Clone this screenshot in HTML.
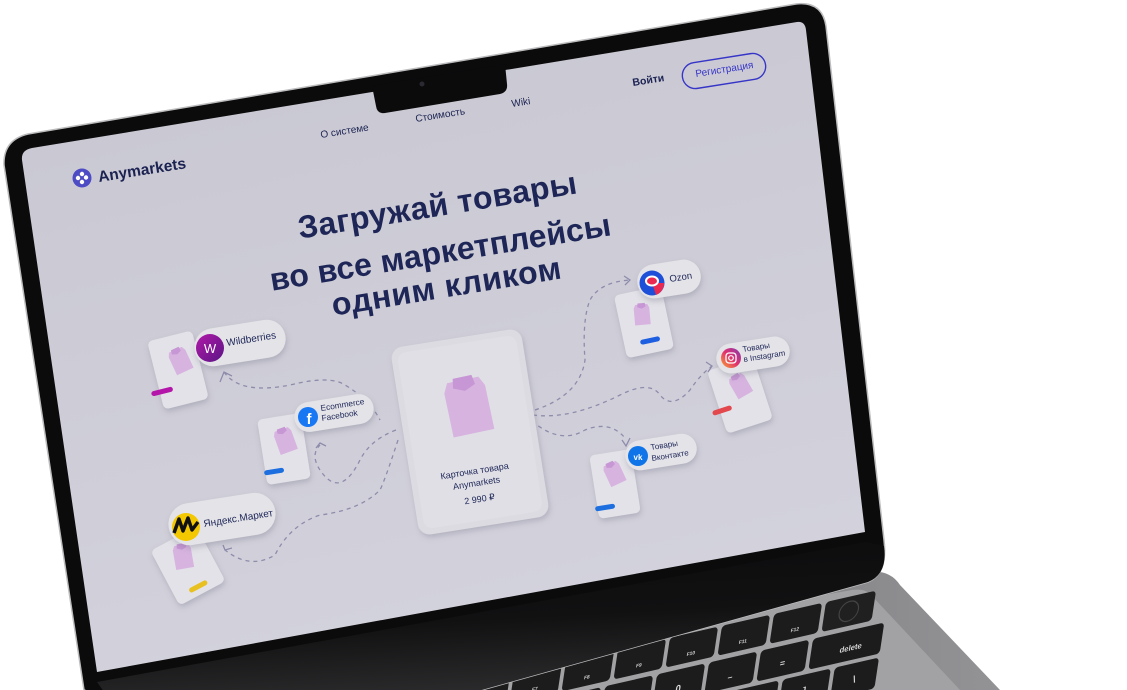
<!DOCTYPE html>
<html><head><meta charset="utf-8"><style>
html,body{margin:0;padding:0;background:#fff;width:1127px;height:690px;overflow:hidden}
svg{display:block}
text{font-family:"Liberation Sans",sans-serif}
</style></head><body>
<svg width="1127" height="690" viewBox="0 0 1127 690" xmlns="http://www.w3.org/2000/svg">
<defs>
<linearGradient id="scr" x1="0" y1="0" x2="0.3" y2="1">
<stop offset="0" stop-color="#c8c7d1"/><stop offset="1" stop-color="#d3d2dc"/></linearGradient>
<linearGradient id="deck" x1="0" y1="0" x2="1" y2="0">
<stop offset="0" stop-color="#555557"/><stop offset="0.6" stop-color="#7e7e81"/><stop offset="1" stop-color="#939396"/></linearGradient>
<linearGradient id="chin" x1="0" y1="0" x2="0.2" y2="1">
<stop offset="0" stop-color="#0b0b0c"/><stop offset="0.45" stop-color="#111112"/><stop offset="1" stop-color="#3c3c3e"/></linearGradient>
<linearGradient id="wb" x1="0" y1="0" x2="1" y2="1"><stop offset="0" stop-color="#b01aa8"/><stop offset="1" stop-color="#5b1485"/></linearGradient>
<linearGradient id="ig" x1="0" y1="1" x2="1" y2="0"><stop offset="0" stop-color="#f9a533"/><stop offset="0.5" stop-color="#e1306c"/><stop offset="1" stop-color="#833ab4"/></linearGradient>
<filter id="sh" x="-30%" y="-30%" width="160%" height="170%"><feDropShadow dx="1" dy="3" stdDeviation="3" flood-color="#77758a" flood-opacity="0.35"/></filter>
<g id="shirt"><path d="M-10,-16 L10,-16 L13,-10 L13,18 L-13,18 L-13,-10 Z" fill="#d7b3e0"/><path d="M-6,-18 L6,-18 L7,-12 L0,-9 L-7,-12 Z" fill="#c796d4"/></g>
</defs>

<!-- deck -->
<path d="M800,570 L880,572 Q893,574 900,585 L1000,690 L150,690 Z" fill="url(#deck)"/>
<path d="M280,690 L852,590 Q866,588 872,596 L960,690 Z" fill="#a2a2a4"/>
<!-- keys -->
<g transform="matrix(0.963,-0.22,-0.15,1,826,602)" fill="#1c1c1d">
<rect x="0" y="0" width="52" height="30" rx="4" fill="#202021"/>
<circle cx="26" cy="15" r="10" fill="none" stroke="#444" stroke-width="1.2"/>
<rect x="-54" y="0" width="50" height="30" rx="4"/>
<rect x="-108" y="0" width="50" height="30" rx="4"/>
<rect x="-162" y="0" width="50" height="30" rx="4"/>
<rect x="-216" y="0" width="50" height="30" rx="4"/>
<rect x="-270" y="0" width="50" height="30" rx="4"/>
<rect x="-324" y="0" width="50" height="30" rx="4"/>
<rect x="-378" y="0" width="50" height="30" rx="4"/>
<rect x="-432" y="0" width="50" height="30" rx="4"/>
<rect x="-486" y="0" width="50" height="30" rx="4"/>
<rect x="-540" y="0" width="50" height="30" rx="4"/>
<rect x="-594" y="0" width="50" height="30" rx="4"/>
<rect x="-8" y="35" width="74" height="31" rx="4"/>
<rect x="-62" y="35" width="50" height="31" rx="4"/>
<rect x="-116" y="35" width="50" height="31" rx="4"/>
<rect x="-170" y="35" width="50" height="31" rx="4"/>
<rect x="-224" y="35" width="50" height="31" rx="4"/>
<rect x="-278" y="35" width="50" height="31" rx="4"/>
<rect x="-332" y="35" width="50" height="31" rx="4"/>
<rect x="-386" y="35" width="50" height="31" rx="4"/>
<rect x="-440" y="35" width="50" height="31" rx="4"/>
<rect x="-494" y="35" width="50" height="31" rx="4"/>
<rect x="20" y="70" width="46" height="31" rx="4"/>
<rect x="-34" y="70" width="50" height="31" rx="4"/>
<rect x="-88" y="70" width="50" height="31" rx="4"/>
<rect x="-142" y="70" width="50" height="31" rx="4"/>
<rect x="-196" y="70" width="50" height="31" rx="4"/>
<rect x="-250" y="70" width="50" height="31" rx="4"/>
<rect x="-304" y="70" width="50" height="31" rx="4"/>
<rect x="-10" y="105" width="76" height="31" rx="4"/>
<rect x="-64" y="105" width="50" height="31" rx="4"/>
<g fill="#d8d8d8" font-size="7" font-family="Liberation Sans,sans-serif" font-weight="bold">
<text x="34" y="56" text-anchor="middle" font-size="8">delete</text>
<text x="-29" y="23" text-anchor="middle" font-size="5">F12</text>
<text x="-83" y="23" text-anchor="middle" font-size="5">F11</text>
<text x="-137" y="23" text-anchor="middle" font-size="5">F10</text>
<text x="-191" y="23" text-anchor="middle" font-size="5">F9</text>
<text x="-245" y="23" text-anchor="middle" font-size="5">F8</text>
<text x="-299" y="23" text-anchor="middle" font-size="5">F7</text>
<text x="-353" y="23" text-anchor="middle" font-size="5">F6</text>
<text x="-407" y="23" text-anchor="middle" font-size="5">F5</text>
<text x="-37" y="56" text-anchor="middle" font-size="9">=</text>
<text x="-91" y="58" text-anchor="middle" font-size="9">–</text>
<text x="-145" y="58" text-anchor="middle" font-size="10">0</text>
<text x="-199" y="58" text-anchor="middle" font-size="10">9</text>
<text x="-253" y="58" text-anchor="middle" font-size="10">8</text>
<text x="43" y="90" text-anchor="middle" font-size="10">\</text>
<text x="-9" y="90" text-anchor="middle" font-size="10">]</text>
<text x="-63" y="90" text-anchor="middle" font-size="10">[</text>
<text x="-117" y="92" text-anchor="middle" font-size="10">P</text>
<text x="-171" y="92" text-anchor="middle" font-size="10">O</text>
<text x="34" y="124" text-anchor="middle" font-size="8">return</text>
</g>
</g>

<!-- lid -->
<path d="M4,165 Q3,140 28,134 L796,4 Q822,1 826,26 L884,540 Q888,574 868,582 L260,752 L84,690 Z" fill="#0b0b0c" stroke="#bdbdbf" stroke-width="1.5"/>
<path d="M97,682 L866,542 L884,546 Q888,574 868,582 L260,752 L110,700 Z" fill="url(#chin)"/>
<!-- screen -->
<path d="M22,160 Q21,150 32,148 L797,22 Q805,21 806,30 L865,532 L97,672 Z" fill="url(#scr)"/>
<!-- notch -->
<path d="M372,86 L505,64 L507,84 Q508,92 500,94 L385,113 Q377,114 376,106 Z" fill="#0b0b0c"/>
<circle cx="422" cy="84" r="2.5" fill="#2a2a33"/>

<!-- dashed paths -->
<g fill="none" stroke="#8e8cab" stroke-width="1.3" stroke-dasharray="4 4">
<path d="M224,372 Q240,395 290,385 Q330,375 345,385 Q370,400 380,420"/>
<path d="M396,430 Q370,440 360,460 Q340,500 320,470 Q310,455 320,445"/>
<path d="M398,440 Q385,480 380,490 Q360,510 320,515 Q290,525 275,555 Q250,570 225,550"/>
<path d="M535,410 Q580,395 585,360 Q582,320 590,300 Q600,282 630,280"/>
<path d="M533,415 Q570,420 620,395 Q650,380 660,395 Q672,410 690,390 Q700,375 712,366"/>
<path d="M532,421 Q560,445 585,430 Q610,420 625,438"/>
</g>
<g fill="none" stroke="#8e8cab" stroke-width="1.3">
<path d="M220,382 L224,372 L232,376"/><path d="M223,545 L225,550 L232,548"/>
<path d="M624,276 L630,280 L625,285"/><path d="M706,362 L712,366 L708,372"/>
<path d="M622,440 L626,446 L630,438"/><path d="M316,448 L320,443 L326,446"/>
</g>

<!-- text & nav -->
<g fill="#1b2252">
<text x="321" y="138" font-size="10" transform="rotate(-9 321 138)">О системе</text>
<text x="416" y="122" font-size="10" transform="rotate(-9 416 122)">Стоимость</text>
<text x="512" y="107" font-size="10" transform="rotate(-9 512 107)">Wiki</text>
<text x="633" y="86" font-size="10.5" font-weight="bold" transform="rotate(-9 633 86)">Войти</text>
</g>
<rect x="682" y="58" width="84" height="26" rx="13" fill="none" stroke="#3635c8" stroke-width="1.4" transform="rotate(-9 724 71)"/>
<text x="696" y="77" font-size="10" fill="#3635c8" transform="rotate(-9 696 77)">Регистрация</text>
<circle cx="82" cy="178" r="9.5" fill="#4d4cc4"/>
<g fill="#fff"><circle cx="82" cy="174" r="2.2"/><circle cx="78" cy="178" r="2.2"/><circle cx="86" cy="177.5" r="2.2"/><circle cx="82" cy="182" r="2.2"/></g>
<text x="99" y="182" font-size="15.5" font-weight="bold" fill="#1b2252" transform="rotate(-9 99 182)">Anymarkets</text>

<g fill="#1d2657" font-weight="bold" font-size="32" text-anchor="middle">
<text x="439" y="216" textLength="282" transform="rotate(-9.3 439 216)">Загружай товары</text>
<text x="442" y="263" textLength="345" transform="rotate(-9.3 442 263)">во все маркетплейсы</text>
<text x="448" y="297" textLength="232" transform="rotate(-9.3 448 297)">одним кликом</text>
</g>

<!-- center card -->
<g transform="rotate(-9 470 432)" filter="url(#sh)">
<rect x="404" y="337" width="132" height="190" rx="12" fill="#dcdbe2"/>
<rect x="410" y="343" width="120" height="178" rx="9" fill="#e0dfe6"/>
</g>
<g transform="translate(468,405) rotate(-12) scale(1.6)"><use href="#shirt"/></g>
<g fill="#1d2657" font-size="9" text-anchor="middle">
<text x="475" y="474" transform="rotate(-9 475 474)">Карточка товара</text>
<text x="477" y="486" transform="rotate(-9 477 486)">Anymarkets</text>
<text x="480" y="502" transform="rotate(-9 480 502)">2 990 ₽</text>
</g>

<!-- small cards -->
<g filter="url(#sh)" fill="#e3e2e8">
<rect x="155" y="335" width="46" height="70" rx="5" transform="rotate(-14 178 370)"/>
<rect x="262" y="416" width="44" height="66" rx="5" transform="rotate(-9 284 449)"/>
<rect x="162" y="535" width="52" height="62" rx="5" transform="rotate(-28 188 566)"/>
<rect x="620" y="290" width="48" height="64" rx="5" transform="rotate(-12 644 322)"/>
<rect x="716" y="362" width="48" height="66" rx="5" transform="rotate(-18 740 395)"/>
<rect x="594" y="452" width="42" height="64" rx="5" transform="rotate(-9 615 484)"/>
</g>
<g transform="translate(180,360) rotate(-25) scale(0.7)"><use href="#shirt"/></g>
<g transform="translate(285,440) rotate(-20) scale(0.7)"><use href="#shirt"/></g>
<g transform="translate(183,556) rotate(-10) scale(0.7)"><use href="#shirt"/></g>
<g transform="translate(642,314) rotate(-5) scale(0.6)"><use href="#shirt"/></g>
<g transform="translate(740,385) rotate(-30) scale(0.65)"><use href="#shirt"/></g>
<g transform="translate(614,473) rotate(-25) scale(0.65)"><use href="#shirt"/></g>
<g>
<rect x="151" y="389" width="22" height="5" rx="2.5" fill="#b316a8" transform="rotate(-14 162 391)"/>
<rect x="264" y="469" width="20" height="5" rx="2.5" fill="#1d6fe0" transform="rotate(-9 274 471)"/>
<rect x="188" y="584" width="20" height="5" rx="2.5" fill="#e8c020" transform="rotate(-28 198 586)"/>
<rect x="640" y="338" width="20" height="5" rx="2.5" fill="#1d5fe0" transform="rotate(-12 650 340)"/>
<rect x="712" y="408" width="20" height="5" rx="2.5" fill="#e2484d" transform="rotate(-18 722 410)"/>
<rect x="595" y="505" width="20" height="5" rx="2.5" fill="#1d6fe0" transform="rotate(-9 605 507)"/>
</g>

<!-- pills -->
<g filter="url(#sh)" fill="#e4e3e8">
<rect x="194" y="324" width="92" height="38" rx="19" transform="rotate(-9 240 343)"/>
<rect x="294" y="398" width="80" height="30" rx="15" transform="rotate(-9 334 413)"/>
<rect x="168" y="498" width="108" height="42" rx="21" transform="rotate(-9 222 519)"/>
<rect x="637" y="262" width="64" height="34" rx="17" transform="rotate(-9 669 279)"/>
<rect x="716" y="340" width="74" height="30" rx="15" transform="rotate(-9 753 355)"/>
<rect x="625" y="437" width="72" height="30" rx="15" transform="rotate(-9 661 452)"/>
</g>
<circle cx="210" cy="348" r="14" fill="url(#wb)"/>
<text x="210" y="353" font-size="13" fill="#fff" text-anchor="middle">W</text>
<text x="227" y="346" font-size="10" fill="#1d2657" transform="rotate(-9 227 346)">Wildberries</text>
<circle cx="308" cy="417" r="10" fill="#1877f2"/>
<text x="309" y="424" font-size="15" font-weight="bold" fill="#fff" text-anchor="middle">f</text>
<text x="321" y="411" font-size="8.3" fill="#1d2657" transform="rotate(-9 321 411)">Ecommerce</text>
<text x="322" y="421" font-size="8.3" fill="#1d2657" transform="rotate(-9 322 421)">Facebook</text>
<circle cx="186" cy="527" r="14" fill="#f3c800"/>
<path d="M174,533 L179,519 L183,531 L188,518 L192,530 L198,522" fill="none" stroke="#111" stroke-width="3.5" stroke-linejoin="round"/>
<text x="204" y="527" font-size="10" fill="#1d2657" transform="rotate(-9 204 527)">Яндекс.Маркет</text>
<circle cx="652" cy="283" r="12.5" fill="#1d4fd8"/>
<path d="M652,283 L664,283 A12.5,12.5 0 0 1 656,295 Z" fill="#ea2850"/>
<ellipse cx="652" cy="281" rx="6" ry="4.5" fill="#ea2850" stroke="#fff" stroke-width="2"/>
<text x="670" y="282" font-size="9.5" fill="#1d2657" transform="rotate(-9 670 282)">Ozon</text>
<circle cx="731" cy="358" r="10" fill="url(#ig)"/>
<rect x="726" y="353" width="10" height="10" rx="3" fill="none" stroke="#fff" stroke-width="1.3"/>
<circle cx="731" cy="358" r="2.3" fill="none" stroke="#fff" stroke-width="1.2"/>
<text x="743" y="352" font-size="8" fill="#1d2657" transform="rotate(-9 743 352)">Товары</text>
<text x="744" y="362" font-size="8" fill="#1d2657" transform="rotate(-9 744 362)">в Instagram</text>
<circle cx="638" cy="456" r="10" fill="#0e74e8"/>
<text x="638" y="460" font-size="8" font-weight="bold" fill="#fff" text-anchor="middle">vk</text>
<text x="651" y="450" font-size="8" fill="#1d2657" transform="rotate(-9 651 450)">Товары</text>
<text x="652" y="461" font-size="8" fill="#1d2657" transform="rotate(-9 652 461)">Вконтакте</text>
</svg>
</body></html>
